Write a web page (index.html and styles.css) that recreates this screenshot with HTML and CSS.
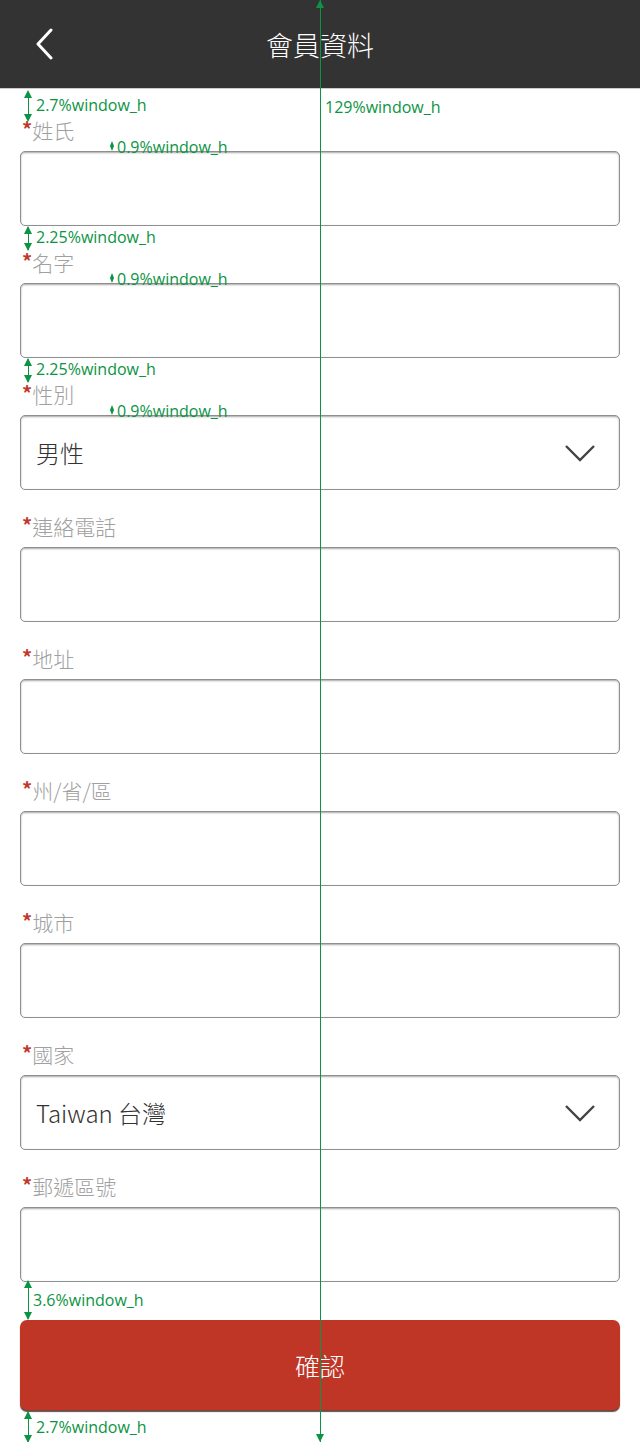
FILE: index.html
```html
<!DOCTYPE html>
<html lang="zh-Hant">
<head>
  <meta charset="UTF-8">
  <meta name="viewport" content="width=device-width, initial-scale=1.0">
  <title>會員資料</title>
  <link rel="stylesheet" href="styles.css">
</head>
<body>
  <header class="topbar">
    <span class="back">
      <svg width="20" height="32" viewBox="0 0 20 32"><path d="M16 2 L3 16 L16 30" fill="none" stroke="#fff" stroke-width="3" stroke-linecap="round" stroke-linejoin="round"/></svg>
    </span>
    <h1>會員資料</h1>
  </header>

  <form class="form">
    <div class="field">
      <label><span class="req">*</span>姓氏</label>
      <div class="box"></div>
    </div>
    <div class="field">
      <label><span class="req">*</span>名字</label>
      <div class="box"></div>
    </div>
    <div class="field">
      <label><span class="req">*</span>性別</label>
      <div class="box select">男性
        <svg width="32" height="18" viewBox="0 0 32 18"><path d="M2 2 L16 16 L30 2" fill="none" stroke="#444" stroke-width="2.4"/></svg>
      </div>
    </div>
    <div class="field">
      <label><span class="req">*</span>連絡電話</label>
      <div class="box"></div>
    </div>
    <div class="field">
      <label><span class="req">*</span>地址</label>
      <div class="box"></div>
    </div>
    <div class="field">
      <label><span class="req">*</span>州/省/區</label>
      <div class="box"></div>
    </div>
    <div class="field">
      <label><span class="req">*</span>城市</label>
      <div class="box"></div>
    </div>
    <div class="field">
      <label><span class="req">*</span>國家</label>
      <div class="box select">Taiwan 台灣
        <svg width="32" height="18" viewBox="0 0 32 18"><path d="M2 2 L16 16 L30 2" fill="none" stroke="#444" stroke-width="2.4"/></svg>
      </div>
    </div>
    <div class="field">
      <label><span class="req">*</span>郵遞區號</label>
      <div class="box"></div>
    </div>
    <button type="button" class="submit">確認</button>
  </form>

  <!-- measurement overlay -->
  <div class="guides">
    <div class="vline" style="left:320px;top:0;height:1442px"></div>
    <span class="tip up" style="left:316px;top:0"></span>
    <span class="tip down" style="left:316px;top:1434px"></span>
    <span class="note" style="left:325px;top:97px">129%window_h</span>

    <div class="vline" style="left:28px;top:92px;height:28px"></div>
    <span class="tip up" style="left:24px;top:90px"></span>
    <span class="tip down" style="left:24px;top:114px"></span>
    <span class="note" style="left:36px;top:95px">2.7%window_h</span>

    <div class="vline" style="left:28px;top:227px;height:23px"></div>
    <span class="tip up" style="left:24px;top:226px"></span>
    <span class="tip down" style="left:24px;top:243px"></span>
    <span class="note" style="left:36px;top:227px">2.25%window_h</span>

    <div class="vline" style="left:28px;top:359px;height:23px"></div>
    <span class="tip up" style="left:24px;top:358px"></span>
    <span class="tip down" style="left:24px;top:375px"></span>
    <span class="note" style="left:36px;top:359px">2.25%window_h</span>

    <span class="dia" style="left:110px;top:141px"></span>
    <span class="note" style="left:117px;top:137px">0.9%window_h</span>
    <span class="dia" style="left:110px;top:273px"></span>
    <span class="note" style="left:117px;top:269px">0.9%window_h</span>
    <span class="dia" style="left:110px;top:405px"></span>
    <span class="note" style="left:117px;top:401px">0.9%window_h</span>

    <div class="vline" style="left:28px;top:1281px;height:38px"></div>
    <span class="tip up" style="left:24px;top:1280px"></span>
    <span class="tip down" style="left:24px;top:1312px"></span>
    <span class="note" style="left:33px;top:1290px">3.6%window_h</span>

    <div class="vline" style="left:28px;top:1412px;height:30px"></div>
    <span class="tip up" style="left:24px;top:1411px"></span>
    <span class="tip down" style="left:24px;top:1435px"></span>
    <span class="note" style="left:36px;top:1417px">2.7%window_h</span>
  </div>
</body>
</html>
```

FILE: styles.css
```css
body {
  margin: 0;
  background: #fff;
  font-family: "Noto Sans CJK TC", "Noto Sans", sans-serif;
  color: #333;
  position: relative;
  min-height: 1442px;
}
.topbar {
  height: 88px;
  background: #333;
  border-bottom: 1px solid #ccc;
  display: flex;
  align-items: center;
  justify-content: center;
  position: relative;
}
.topbar h1 {
  margin: 0;
  font-size: 27px;
  font-weight: 300;
  color: #fff;
}
.back {
  position: absolute;
  left: 35px;
  top: 28px;
  display: flex;
}
.form {
  padding: 29px 20px 0;
  display: flex;
  flex-direction: column;
  gap: 24px;
}
.field {
  display: flex;
  flex-direction: column;
  gap: 9px;
}
.field label {
  height: 24px;
  line-height: 24px;
  font-size: 21px;
  font-weight: 300;
  color: #a0a0a0;
  display: flex;
  align-items: center;
}
.req {
  color: #c0392b;
  font-size: 20px;
  font-weight: 700;
  align-self: flex-start;
  line-height: 22px;
  height: 16px;
  margin-left: 2px;
}
.box {
  height: 75px;
  box-sizing: border-box;
  border: 1px solid #8f8f8f;
  border-radius: 5px;
  box-shadow: inset 0 1px 2px rgba(0, 0, 0, 0.35);
  background: #fff;
}
.select {
  display: flex;
  align-items: center;
  justify-content: space-between;
  padding: 0 23px 0 15px;
  font-size: 24px;
  font-weight: 300;
  color: #333;
}
.submit {
  margin-top: 14px;
  height: 90px;
  border: none;
  border-radius: 7px;
  background: #bf3627;
  box-shadow: 0 2px 1px #6b4a46;
  color: #fff;
  font-family: inherit;
  font-size: 25px;
  font-weight: 300;
}
.guides {
  position: absolute;
  left: 0;
  top: 0;
  width: 640px;
  height: 1442px;
  pointer-events: none;
}
.vline {
  position: absolute;
  width: 1px;
  background: #0b9444;
}
.tip {
  position: absolute;
  width: 0;
  height: 0;
  border-left: 4.5px solid transparent;
  border-right: 4.5px solid transparent;
}
.tip.up {
  border-bottom: 8px solid #0b9444;
}
.tip.down {
  border-top: 8px solid #0b9444;
}
.dia {
  position: absolute;
  width: 4px;
  height: 10px;
  background: #0b9444;
  clip-path: polygon(50% 0, 100% 50%, 50% 100%, 0 50%);
}
.note {
  position: absolute;
  font-family: "Open Sans", sans-serif;
  font-size: 16px;
  line-height: 20px;
  color: #0b9444;
  white-space: nowrap;
}
```
